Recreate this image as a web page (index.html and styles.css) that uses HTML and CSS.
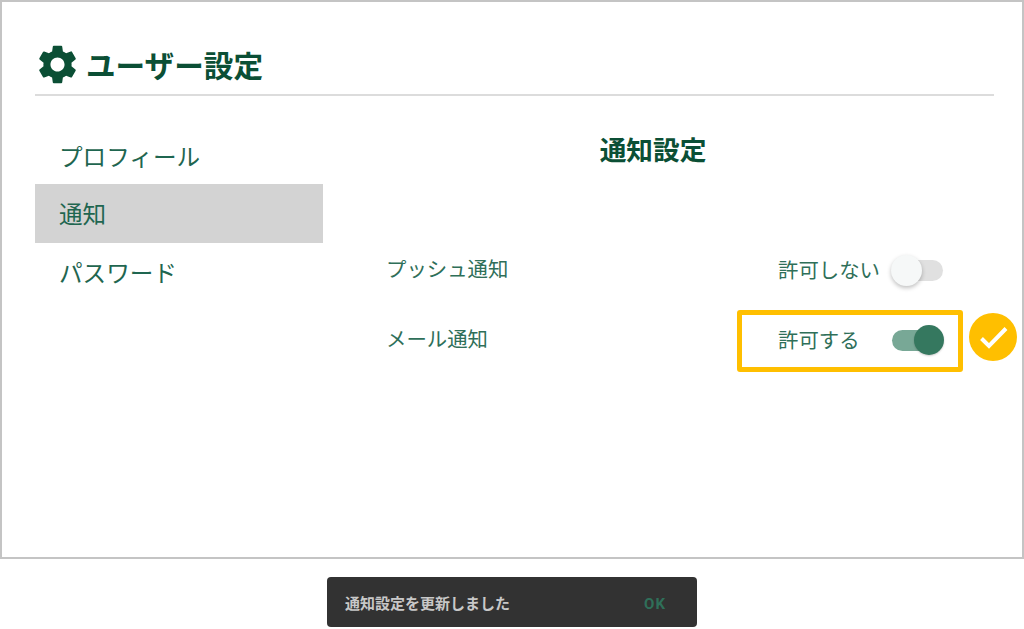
FILE: index.html
```html
<!DOCTYPE html>
<html lang="ja">
<head>
<meta charset="utf-8">
<title>ユーザー設定</title>
<link rel="stylesheet" href="styles.css">
</head>
<body>
<main class="frame">
  <header class="page-head">
    <svg class="gear" viewBox="0 0 24 24" aria-hidden="true"><path d="M19.14 12.94c.04-.3.06-.61.06-.94 0-.32-.02-.64-.07-.94l2.03-1.58a.49.49 0 0 0 .12-.61l-1.92-3.32a.488.488 0 0 0-.59-.22l-2.39.96c-.5-.38-1.03-.7-1.62-.94l-.36-2.54a.484.484 0 0 0-.48-.41h-3.84c-.24 0-.43.17-.47.41l-.36 2.54c-.59.24-1.13.57-1.62.94l-2.39-.96c-.22-.08-.47 0-.59.22L2.74 8.87c-.12.21-.08.47.12.61l2.03 1.58c-.05.3-.09.63-.09.94s.02.64.07.94l-2.03 1.58a.49.49 0 0 0-.12.61l1.92 3.32c.12.22.37.29.59.22l2.39-.96c.5.38 1.03.7 1.62.94l.36 2.54c.05.24.24.41.48.41h3.84c.24 0 .44-.17.47-.41l.36-2.54c.59-.24 1.13-.56 1.62-.94l2.39.96c.22.08.47 0 .59-.22l1.92-3.32c.12-.22.07-.47-.12-.61l-2.01-1.58zM12 15.6c-1.98 0-3.6-1.62-3.6-3.6s1.62-3.6 3.6-3.6 3.6 1.62 3.6 3.6-1.62 3.6-3.6 3.6z"/></svg>
    <h1 class="page-title">ユーザー設定</h1>
  </header>
  <div class="content">
    <nav class="side-nav">
      <a class="nav-item">プロフィール</a>
      <a class="nav-item is-active">通知</a>
      <a class="nav-item">パスワード</a>
    </nav>
    <section class="panel">
      <h2 class="panel-title">通知設定</h2>
      <div class="setting-row">
        <span class="setting-label">プッシュ通知</span>
        <div class="setting-control">
          <span class="state">許可しない</span>
          <span class="switch"><span class="track"></span><span class="knob"></span></span>
        </div>
      </div>
      <div class="setting-row">
        <span class="setting-label">メール通知</span>
        <div class="setting-control is-highlighted">
          <span class="state">許可する</span>
          <span class="switch is-on"><span class="track"></span><span class="knob"></span></span>
          <svg class="check-badge" viewBox="0 0 48 48" aria-hidden="true"><circle cx="24" cy="24" r="24" fill="#ffbf00"/><path d="M12.5 25.5l7.5 7.5L37 15.5" fill="none" stroke="#fff" stroke-width="4"/></svg>
        </div>
      </div>
    </section>
  </div>
</main>
<div class="toast-area">
  <div class="toast">
    <span class="toast-text">通知設定を更新しました</span>
    <span class="toast-action">OK</span>
  </div>
</div>
</body>
</html>
```
FILE: styles.css
```css
* { box-sizing: border-box; }
html, body { margin: 0; height: 629px; overflow: hidden; background: #fff; }
body {
  font-family: "Roboto", "Noto Sans CJK JP", sans-serif;
  color: #1f5f48;
}
.frame {
  height: 559px;
  border: 2px solid #c4c4c4;
  padding: 0 28px 0 33px;
}
.page-head {
  display: flex;
  align-items: center;
  gap: 5px;
  height: 94px;
  padding-top: 30px;
  border-bottom: 2px solid #dcdcdc;
  color: #0b4f35;
}
.gear { width: 47px; height: 47px; fill: #0b4f35; flex: none; margin: 3px 0 0 -1px; }
.page-title { margin: 8px 0 0; font-size: 29.6px; font-weight: 700; line-height: 40px; }
.content { display: flex; }
.side-nav {
  width: 288px;
  flex: none;
  padding-top: 29px;
  display: flex;
  flex-direction: column;
}
.nav-item {
  height: 59px;
  padding: 0 24px 2px;
  display: flex;
  align-items: center;
  font-size: 23.6px;
  color: #1f6650;
}
.nav-item:first-child { padding: 2px 24px 0; }
.nav-item:last-child { height: 58px; padding-bottom: 0; }
.is-active { background: #d3d3d3; }
.panel { flex: 1; padding: 36px 0 0 63px; }
.panel-title {
  margin: 0 0 63px;
  padding-right: 74px;
  font-size: 26.7px;
  line-height: 38px;
  font-weight: 700;
  color: #0b4f35;
  text-align: center;
}
.setting-row {
  display: flex;
  align-items: center;
  justify-content: space-between;
  height: 70px;
  font-size: 20.4px;
  color: #2f6f59;
}
.setting-control {
  position: relative;
  display: flex;
  align-items: center;
  width: 226px;
  height: 62px;
  margin: 6px 31px 0 0;
  padding-left: 41px;
}
.state { width: 112px; margin-bottom: 4px; white-space: nowrap; }
.is-highlighted { outline: 5px solid #ffbf00; outline-offset: -5px; border-radius: 3px; }
.switch { position: relative; display: block; width: 54px; height: 31px; margin-bottom: 2px; flex: none; }
.track {
  position: absolute; left: 2px; right: 1px; top: 5px; height: 21px;
  border-radius: 11px; background: #e0e0e0;
}
.knob {
  position: absolute; left: 1px; top: 0; width: 31px; height: 31px;
  border-radius: 50%; background: #f6f8f8;
  box-shadow: 0 2px 4px rgba(0,0,0,.25);
}
.is-on .track { background: #78a896; }
.is-on .knob { left: 24px; width: 30px; height: 30px; background: #35785f; box-shadow: 0 1px 2px rgba(0,0,0,.2); }
.check-badge { position: absolute; left: 232px; top: 3px; width: 48px; height: 48px; }
.toast-area { display: flex; justify-content: center; padding-top: 18px; }
.toast {
  width: 370px;
  height: 50px;
  border-radius: 4px;
  background: #323232;
  display: flex;
  align-items: center;
  justify-content: space-between;
  padding: 0 31px 0 18px;
  font-size: 15px;
  font-weight: 700;
}
.toast-text { color: #c8c8c8; }
.toast-action { color: #2f6f59; letter-spacing: 1px; padding-top: 3px; }
```
